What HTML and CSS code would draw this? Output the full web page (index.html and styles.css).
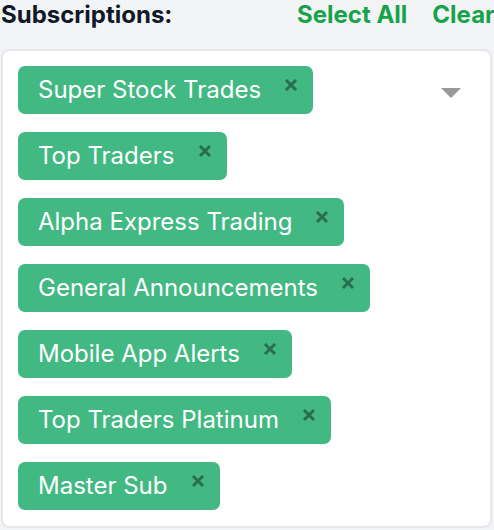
FILE: index.html
```html
<!DOCTYPE html>
<html>
<head>
<meta charset="utf-8">
<link rel="stylesheet" href="styles.css">
</head>
<body>
<div class="page">
  <div class="header">
    <span class="title">Subscriptions:</span>
    <span class="actions">
      <span class="action">Select All</span>
      <span class="action">Clear</span>
    </span>
  </div>
  <div class="box">
    <div class="tags">
      <span class="tag">Super Stock Trades<svg class="x" viewBox="0 0 14 14"><path d="M2 2L12 12M12 2L2 12"/></svg></span>
      <span class="tag">Top Traders<svg class="x" viewBox="0 0 14 14"><path d="M2 2L12 12M12 2L2 12"/></svg></span>
      <span class="tag">Alpha Express Trading<svg class="x" viewBox="0 0 14 14"><path d="M2 2L12 12M12 2L2 12"/></svg></span>
      <span class="tag">General Announcements<svg class="x" viewBox="0 0 14 14"><path d="M2 2L12 12M12 2L2 12"/></svg></span>
      <span class="tag">Mobile App Alerts<svg class="x" viewBox="0 0 14 14"><path d="M2 2L12 12M12 2L2 12"/></svg></span>
      <span class="tag">Top Traders Platinum<svg class="x" viewBox="0 0 14 14"><path d="M2 2L12 12M12 2L2 12"/></svg></span>
      <span class="tag">Master Sub<svg class="x" viewBox="0 0 14 14"><path d="M2 2L12 12M12 2L2 12"/></svg></span>
    </div>
    <span class="caret"></span>
  </div>
</div>
</body>
</html>
```
FILE: styles.css
```css
html, body {
  margin: 0;
  padding: 0;
  background: #f3f4f6;
  overflow: hidden;
}
.page {
  width: 494px;
  height: 530px;
  box-sizing: border-box;
  overflow: hidden;
  padding-left: 1px;
  font-family: Inter, "Liberation Sans", sans-serif;
}
.header {
  display: flex;
  align-items: baseline;
  height: 49px;
  white-space: nowrap;
}
.title {
  font-size: 24px;
  font-weight: 700;
  color: #111827;
  line-height: 30px;
  flex: 0 0 296px;
}
.actions {
  display: flex;
  gap: 25px;
}
.action {
  font-size: 24px;
  font-weight: 700;
  color: #16a34a;
  line-height: 30px;
}
.box {
  position: relative;
  box-sizing: border-box;
  width: 491px;
  background: #fff;
  border: 2px solid #e5e7eb;
  border-radius: 8px;
  padding: 15px 15px 16px 15px;
}
.tags {
  display: flex;
  flex-direction: column;
  align-items: flex-start;
  gap: 18px;
}
.tag {
  position: relative;
  display: inline-block;
  box-sizing: border-box;
  height: 48px;
  line-height: 48px;
  padding: 0 52px 0 20px;
  background: #42b883;
  color: #fff;
  border-radius: 7px;
  font-size: 24px;
  white-space: nowrap;
}
.x {
  position: absolute;
  right: 15px;
  top: 12px;
  width: 14px;
  height: 14px;
  stroke: #2b6e4f;
  stroke-width: 3;
  fill: none;
}
.caret {
  position: absolute;
  right: 29px;
  top: 37px;
  width: 0;
  height: 0;
  border-top: 10px solid #999;
  border-left: 10px solid transparent;
  border-right: 10px solid transparent;
}
```
